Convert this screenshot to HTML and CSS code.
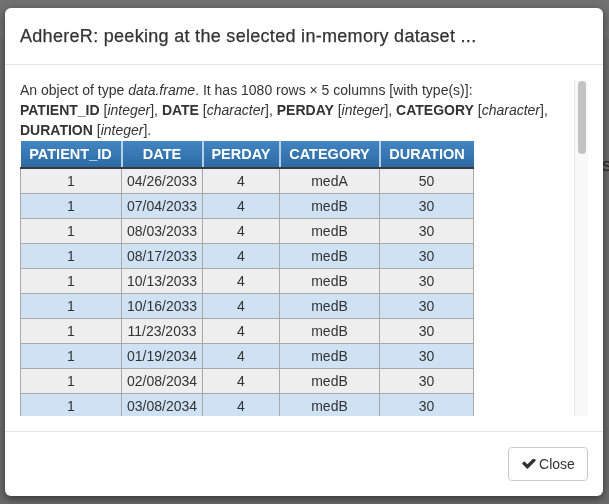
FILE: index.html
```html
<!DOCTYPE html>
<html>
<head>
<meta charset="utf-8">
<link rel="stylesheet" href="styles.css">
</head>
<body>
<div class="page">
  <div class="page-band"></div>
  <span class="page-text">Se</span>
</div>
<div class="backdrop">
  <div class="modal">
    <div class="modal-header">
      <h4 class="modal-title">AdhereR: peeking at the selected in-memory dataset ...</h4>
    </div>
    <div class="modal-body">
      <div class="scroll-wrap">
        <div class="scroller">
          <p class="desc">An object of type <i>data.frame</i>. It has 1080 rows × 5 columns [with type(s)]: <b>PATIENT_ID</b> [<i>integer</i>], <b>DATE</b> [<i>character</i>], <b>PERDAY</b> [<i>integer</i>], <b>CATEGORY</b> [<i>character</i>], <b>DURATION</b> [<i>integer</i>].</p>
          <table class="data">
            <colgroup>
              <col class="c1"><col class="c2"><col class="c3"><col class="c4"><col class="c5">
            </colgroup>
            <thead>
              <tr><th>PATIENT_ID</th><th>DATE</th><th>PERDAY</th><th>CATEGORY</th><th>DURATION</th></tr>
            </thead>
            <tbody>
              <tr><td>1</td><td>04/26/2033</td><td>4</td><td>medA</td><td>50</td></tr>
              <tr><td>1</td><td>07/04/2033</td><td>4</td><td>medB</td><td>30</td></tr>
              <tr><td>1</td><td>08/03/2033</td><td>4</td><td>medB</td><td>30</td></tr>
              <tr><td>1</td><td>08/17/2033</td><td>4</td><td>medB</td><td>30</td></tr>
              <tr><td>1</td><td>10/13/2033</td><td>4</td><td>medB</td><td>30</td></tr>
              <tr><td>1</td><td>10/16/2033</td><td>4</td><td>medB</td><td>30</td></tr>
              <tr><td>1</td><td>11/23/2033</td><td>4</td><td>medB</td><td>30</td></tr>
              <tr><td>1</td><td>01/19/2034</td><td>4</td><td>medB</td><td>30</td></tr>
              <tr><td>1</td><td>02/08/2034</td><td>4</td><td>medB</td><td>30</td></tr>
              <tr><td>1</td><td>03/08/2034</td><td>4</td><td>medB</td><td>30</td></tr>
              <tr><td>1</td><td>04/09/2034</td><td>4</td><td>medB</td><td>30</td></tr>
            </tbody>
          </table>
        </div>
        <div class="scrollbar">
          <div class="thumb"></div>
        </div>
      </div>
    </div>
    <div class="modal-footer">
      <button class="btn" type="button"><svg class="check" viewBox="100 420 1600 1130" aria-hidden="true"><path d="M1671 566q0 40-28 68l-724 724-136 136q-28 28-68 28t-68-28l-136-136-362-362q-28-28-28-68t28-68l136-136q28-28 68-28t68 28l294 295 656-657q28-28 68-28t68 28l136 136q28 28 28 68z"/></svg>Close</button>
    </div>
  </div>
</div>
</body>
</html>
```
FILE: styles.css
```css
html, body {
  margin: 0;
  padding: 0;
  height: 100%;
  background: #6b6b6b;
  font-family: "Liberation Sans", Arial, Helvetica, sans-serif;
  color: #333;
}

.page {
  position: relative;
  height: 100%;
}

.page-band {
  height: 39px;
  background: #717171;
}

.page-text {
  position: absolute;
  left: 602px;
  top: 158px;
  font-size: 14px;
  color: #222;
}

.backdrop {
  position: fixed;
  inset: 0;
  padding: 8px 6px 0 5px;
}

.modal {
  width: 598px;
  background: #fff;
  border-radius: 6px;
  box-shadow: 0 3px 9px rgba(0, 0, 0, 0.5);
  overflow: hidden;
}

.modal-header {
  padding: 15px;
  border-bottom: 1px solid #e5e5e5;
}

.modal-title {
  margin: 0;
  font-size: 18px;
  line-height: 26px;
  font-weight: normal;
  letter-spacing: 0.3px;
  -webkit-text-stroke: 0.25px #333;
  color: #333;
}

.modal-body {
  padding: 15px;
}

.scroll-wrap {
  display: flex;
  height: 336px;
}

.scroller {
  flex: 1;
  min-width: 0;
  overflow: hidden;
  padding-right: 20px;
}

.scrollbar {
  width: 14px;
  flex: none;
  background: #f8f8f8;
  border-left: 1px solid #ececec;
  box-sizing: border-box;
  padding: 1px 2px 0 3px;
}

.thumb {
  height: 73px;
  background: #c2c2c2;
  border-radius: 4px;
}

.desc {
  margin: 0 0 1px;
  font-size: 14px;
  line-height: 20px;
}

.data {
  border-collapse: collapse;
  table-layout: fixed;
  width: 453px;
  font-size: 14px;
}

.c1 { width: 101px; }
.c2 { width: 81px; }
.c3 { width: 77px; }
.c4 { width: 100px; }
.c5 { width: 94px; }

.data th {
  background: linear-gradient(#4385c2, #2c6aa4);
  color: #fff;
  font-weight: bold;
  font-size: 14.5px;
  line-height: 20px;
  padding: 3px 0 3px;
  border-left: 2px solid #b6d0ea;
  border-bottom: 2px solid #343a40;
  text-align: center;
}

.data th:first-child {
  border-left: none;
}

.data td {
  text-align: center;
  line-height: 20px;
  padding: 2px 0 2px;
  border: 1px solid #a9a9a9;
  color: #333;
}

.data tbody tr:nth-child(odd) td {
  background: #eeeeee;
}

.data tbody tr:nth-child(even) td {
  background: #cfe2f3;
}

.modal-footer {
  border-top: 1px solid #e5e5e5;
  padding: 15px;
  display: flex;
  justify-content: flex-end;
}

.btn {
  display: flex;
  align-items: center;
  justify-content: center;
  gap: 3px;
  height: 34px;
  width: 80px;
  padding: 0 0 0 1px;
  font-family: "Liberation Sans", Arial, Helvetica, sans-serif;
  font-size: 14px;
  color: #333;
  background: #fff;
  border: 1px solid #ccc;
  border-radius: 4px;
}

.check {
  width: 14px;
  height: 10px;
  fill: #333;
}
```
